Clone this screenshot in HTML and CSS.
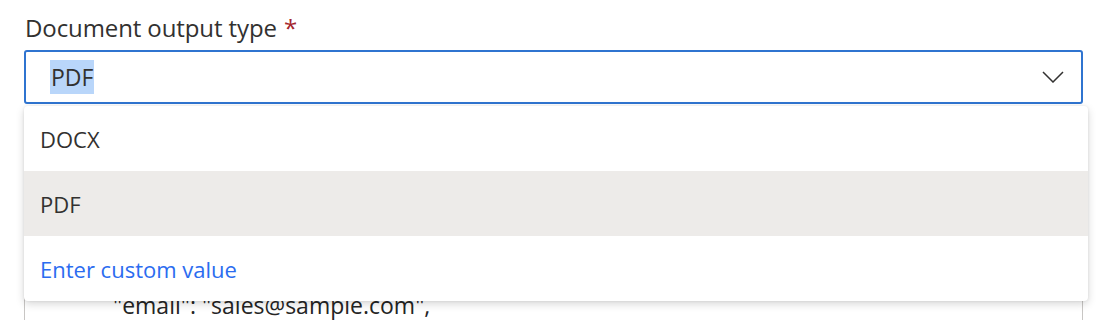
FILE: index.html
```html
<!DOCTYPE html>
<html lang="en">
<head>
<meta charset="utf-8">
<title>Document output type</title>
<link rel="stylesheet" href="styles.css">
</head>
<body>
<div class="field">
  <label class="label">Document output type<span class="req">*</span></label>
  <div class="combo">
    <div class="input">
      <span class="sel">PDF</span>
      <svg class="chev" width="22" height="12" viewBox="0 0 22 12" aria-hidden="true"><path d="M1 1 L11 11 L21 1" fill="none" stroke="#323130" stroke-width="1.5"/></svg>
    </div>
    <div class="menu">
      <div class="opt">DOCX</div>
      <div class="opt opt-active">PDF</div>
      <div class="opt opt-custom">Enter custom value</div>
    </div>
  </div>
  <div class="textarea">
    <div class="code">"email": "sales@sample.com",</div>
  </div>
</div>
</body>
</html>
```
FILE: styles.css
```css
html, body {
  margin: 0;
  padding: 0;
  background: #ffffff;
}
body {
  height: 320px;
  overflow: hidden;
  font-family: "Open Sans", "Noto Sans", sans-serif;
  color: #323130;
}
.field {
  padding: 12px 27px 0 24px;
}
.label {
  display: block;
  font-size: 24px;
  line-height: 32px;
  padding-left: 1px;
  color: #323130;
  margin-bottom: 6px;
  letter-spacing: -0.1px;
}
.req {
  color: #a4262c;
  margin-left: 7px;
}
.combo {
  position: relative;
}
.input {
  box-sizing: border-box;
  height: 54px;
  border: 2px solid #2f74d0;
  border-radius: 3px;
  display: flex;
  align-items: center;
  justify-content: space-between;
  padding: 0 17px 0 24px;
}
.sel {
  background: #b9d6fa;
  font-size: 23px;
  line-height: 34px;
  padding: 0 1px;
}
.chev {
  display: block;
}
.menu {
  position: absolute;
  top: 56px;
  left: 0;
  right: -5px;
  background: #ffffff;
  border-radius: 4px;
  box-shadow: 0 3px 8px rgba(0,0,0,0.16), 0 0 3px rgba(0,0,0,0.08);
  overflow: hidden;
  z-index: 2;
}
.opt {
  height: 65px;
  display: flex;
  align-items: center;
  padding-left: 16px;
  font-size: 22px;
  color: #323130;
}
.opt-active {
  background: #edebe9;
}
.opt-custom {
  color: #2b6cf0;
}
.textarea {
  box-sizing: border-box;
  margin-top: 16px;
  height: 210px;
  border: 1px solid #c8c6c4;
  border-radius: 2px;
  padding: 169px 0 0 88px;
}
.code {
  font-size: 23px;
  line-height: 30px;
  color: #242424;
}
```
